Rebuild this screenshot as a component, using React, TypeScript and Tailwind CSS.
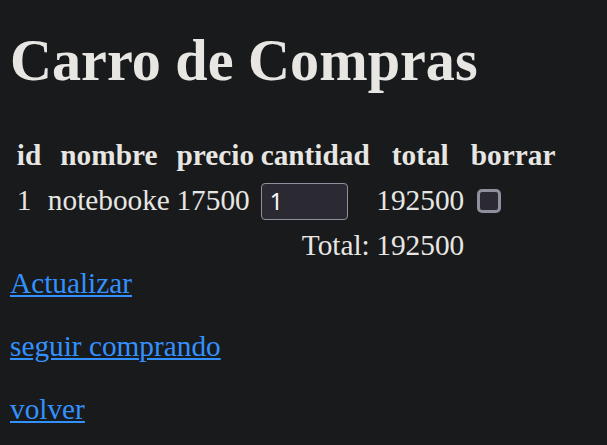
export default function App() {
  const th = "font-bold px-[1.8px] py-[3px]";
  const td = "px-[1.8px] py-[3px]";
  return (
    <div
      className="min-h-screen bg-[#181a1b] text-[#e8e6e3] px-[10px] pt-[29px] text-[29.3px]"
      style={{ fontFamily: '"Liberation Serif", "Times New Roman", serif' }}
    >
      <h1 className="text-[58.2px] font-bold leading-[1.107] m-0">Carro de Compras</h1>
      <table className="border-separate border-spacing-[3.6px] mt-[40px] ml-[2px] leading-[1.15]">
        <thead>
          <tr>
            <th className={th}>id</th>
            <th className={th}>nombre</th>
            <th className={th}>precio</th>
            <th className={th}>cantidad</th>
            <th className={th}>total</th>
            <th className={th}>borrar</th>
          </tr>
        </thead>
        <tbody>
          <tr>
            <td className={td}>1</td>
            <td className={td}>notebooke</td>
            <td className={td}>17500</td>
            <td className={td}>
              <input
                type="text"
                defaultValue="1"
                className="w-[87px] h-[37px] bg-[#2b2a33] border border-[#8f8f9d] rounded-[4px] pl-[8px] pr-[6px] text-[#fbfbfe] text-[23px] align-middle outline-none"
                style={{ fontFamily: '"Noto Sans", "Open Sans", sans-serif' }}
              />
            </td>
            <td className={`${td} text-center`}>192500</td>
            <td className={td}>
              <span className="inline-block align-middle ml-[6px] mb-[5px] w-[24px] h-[24px] rounded-[5px] border-[3px] border-[#8f8f9d] bg-[#2b2a33]" />
            </td>
          </tr>
          <tr>
            <td colSpan={4} className={`${td} text-right`}>Total:</td>
            <td className={td}>192500</td>
            <td />
          </tr>
        </tbody>
      </table>
      <p className="m-0 mt-[-2px] leading-[1.107]">
        <a href="#" className="text-[#3391ff] underline">Actualizar</a>
      </p>
      <p className="m-0 mt-[31px] leading-[1.107]">
        <a href="#" className="text-[#3391ff] underline">seguir comprando</a>
      </p>
      <p className="m-0 mt-[31px] leading-[1.107]">
        <a href="#" className="text-[#3391ff] underline">volver</a>
      </p>
    </div>
  );
}
